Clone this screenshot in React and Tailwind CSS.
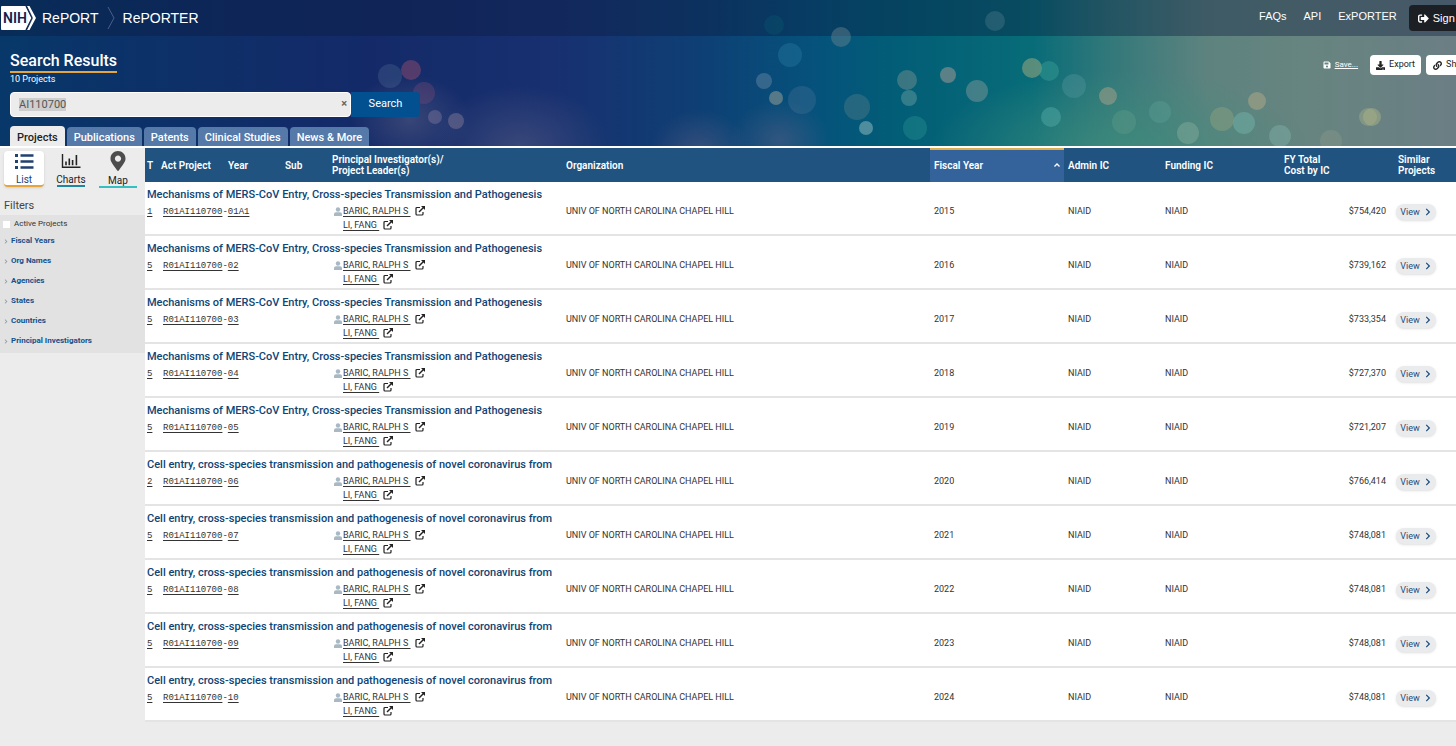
import { useEffect, useRef, useState } from "react";
import { FaChevronRight, FaDownload, FaLink, FaMapMarkerAlt, FaSave, FaSignOutAlt } from "react-icons/fa";

const MERS_TITLE = "Mechanisms of MERS-CoV Entry, Cross-species Transmission and Pathogenesis";
const CELL_TITLE = "Cell entry, cross-species transmission and pathogenesis of novel coronavirus from";

const PROJECTS = [
  { type: "1", suffix: "01A1", title: MERS_TITLE, year: 2015, cost: "$754,420" },
  { type: "5", suffix: "02",   title: MERS_TITLE, year: 2016, cost: "$739,162" },
  { type: "5", suffix: "03",   title: MERS_TITLE, year: 2017, cost: "$733,354" },
  { type: "5", suffix: "04",   title: MERS_TITLE, year: 2018, cost: "$727,370" },
  { type: "5", suffix: "05",   title: MERS_TITLE, year: 2019, cost: "$721,207" },
  { type: "2", suffix: "06",   title: CELL_TITLE, year: 2020, cost: "$766,414" },
  { type: "5", suffix: "07",   title: CELL_TITLE, year: 2021, cost: "$748,081" },
  { type: "5", suffix: "08",   title: CELL_TITLE, year: 2022, cost: "$748,081" },
  { type: "5", suffix: "09",   title: CELL_TITLE, year: 2023, cost: "$748,081" },
  { type: "5", suffix: "10",   title: CELL_TITLE, year: 2024, cost: "$748,081" },
];

const TABS = ["Projects", "Publications", "Patents", "Clinical Studies", "News & More"];
const FILTERS = ["Fiscal Years", "Org Names", "Agencies", "States", "Countries", "Principal Investigators"];

// [cx, cy, r, fill, opacity]
const BOKEH = [
  [390, 76, 12, "#5f7fa0", 0.25],   [411, 70, 10, "#a0506e", 0.45],  [424, 93, 11, "#8a5078", 0.3],
  [435, 117, 7, "#8a80a0", 0.4],    [456, 121, 8, "#8a7f9a", 0.45],  [774, 25, 10, "#0a5a70", 0.35],
  [790, 55, 12, "#2a80a8", 0.35],   [841, 37, 10, "#6a8490", 0.45],  [764, 81, 8, "#6d8ba5", 0.45],
  [776, 98, 7, "#a3a595", 0.5],     [802, 100, 14, "#4a7296", 0.35], [857, 107, 13, "#5b8088", 0.4],
  [866, 128, 7, "#7fb0b5", 0.6],    [907, 80, 10, "#6a8a8c", 0.55],  [909, 98, 8, "#5c959a", 0.55],
  [948, 75, 8, "#8a9290", 0.65],    [977, 91, 11, "#6b8f92", 0.6],   [915, 128, 12, "#2f9a94", 0.35],
  [995, 21, 10, "#4a7a8c", 0.4],    [1032, 68, 10, "#86a07c", 0.65], [1049, 71, 10, "#3aa094", 0.45],
  [1074, 86, 12, "#4e9298", 0.45],  [1051, 117, 10, "#50a8a4", 0.5], [1108, 96, 9, "#9a9c86", 0.6],
  [1124, 122, 12, "#5a9a88", 0.45], [1160, 112, 11, "#5aa096", 0.4], [1188, 133, 11, "#82aa9a", 0.5],
  [1222, 119, 12, "#8aa07e", 0.5],  [1244, 123, 11, "#72b2a8", 0.5], [1257, 101, 9, "#a0a186", 0.65],
  [1280, 136, 11, "#7aaaa0", 0.55], [1331, 141, 11, "#8a9a86", 0.4], [1368, 117, 9, "#a0b088", 0.45],
  [1372, 117, 9, "#b0b688", 0.45],
];

function Backdrop() {
  return (
    <svg aria-hidden="true" className="absolute inset-0 h-full w-full" viewBox="0 0 1456 146" preserveAspectRatio="none">
      <defs>
        <linearGradient id="sky">
          <stop offset="0" stopColor="#08386a" />
          <stop offset="0.1" stopColor="#0c3168" />
          <stop offset="0.25" stopColor="#142a68" />
          <stop offset="0.38" stopColor="#183070" />
          <stop offset="0.48" stopColor="#0e3f74" />
          <stop offset="0.56" stopColor="#05527c" />
          <stop offset="0.62" stopColor="#025e76" />
          <stop offset="0.71" stopColor="#086c78" />
          <stop offset="0.76" stopColor="#31787a" />
          <stop offset="0.83" stopColor="#5e837f" />
          <stop offset="0.9" stopColor="#678480" />
          <stop offset="1" stopColor="#6b7e84" />
        </linearGradient>
        <radialGradient id="mist">
          <stop offset="0" stopColor="#3f8c7c" stopOpacity="0.8" />
          <stop offset="1" stopColor="#3f8c7c" stopOpacity="0" />
        </radialGradient>
        <radialGradient id="haze">
          <stop offset="0" stopColor="#5a5f84" stopOpacity="0.5" />
          <stop offset="1" stopColor="#5a5f84" stopOpacity="0" />
        </radialGradient>
      </defs>
      <rect width="1456" height="146" fill="url(#sky)" />
      <ellipse cx="1120" cy="150" rx="190" ry="80" fill="url(#mist)" />
      <ellipse cx="520" cy="146" rx="90" ry="60" fill="url(#haze)" />
      <ellipse cx="410" cy="120" rx="60" ry="45" fill="url(#haze)" />
      <ellipse cx="700" cy="150" rx="50" ry="40" fill="url(#haze)" />
      <ellipse cx="780" cy="140" rx="50" ry="40" fill="url(#haze)" />
      <rect width="1456" height="36" fill="#0a1a3c" opacity="0.38" />
      {BOKEH.map(([cx, cy, r, fill, opacity]) => (
        <circle key={`${cx}-${cy}`} cx={cx} cy={cy} r={r} fill={fill} opacity={opacity} />
      ))}
    </svg>
  );
}

function NihLogo() {
  return (
    <svg role="img" aria-label="NIH" className="h-6 w-9" viewBox="0 0 36 24">
      <path d="M2 0H26L33 12L26 24H2Q1 24 1 23V1Q1 0 2 0Z" fill="#fff" />
      <path d="M27 0H29.5L36 12L29.5 24H27L33 12Z" fill="#fff" />
      <path d="M26 0L32 12L26 24" fill="none" stroke="#10234e" strokeWidth="1.3" />
      <text x="3" y="17" fontSize="14" fontWeight="600" fontFamily="Roboto" fill="#10234e">NIH</text>
    </svg>
  );
}

function ListIcon() {
  return (
    <svg aria-hidden="true" className="h-4 w-5" viewBox="0 0 20 16" fill="#20426e">
      <path d="M1 1H4V4H1ZM1 7H4V10H1ZM1 13H4V16H1Z" />
      <path d="M6.5 1.3H19.5V3.7H6.5ZM6.5 7.3H19.5V9.7H6.5ZM6.5 13.3H19.5V15.7H6.5Z" />
    </svg>
  );
}

function ChartsIcon() {
  return (
    <svg aria-hidden="true" className="h-4 w-5" viewBox="0 0 20 16" fill="none" stroke="#222" strokeWidth="1.4">
      <path d="M1.5 1V14.3H19.5" />
      <path d="M5 8.5V12.3M8.3 5.5V12.3M11.6 7V12.3M15.4 2V12.3" strokeWidth="1.6" />
    </svg>
  );
}

function ExternalIcon() {
  return (
    <svg aria-hidden="true" className="h-[10px] w-[10px] shrink-0" viewBox="0 0 10 10" fill="none" stroke="#222" strokeWidth="1.2">
      <path d="M5 1.5H2Q1 1.5 1 2.5V8Q1 9 2 9H7Q8 9 8 8V6" />
      <path d="M4 6L8.5 1.5" strokeWidth="1.5" />
      <path d="M6 0H10V4Z" fill="#222" stroke="none" />
    </svg>
  );
}

function PersonIcon() {
  return (
    <svg aria-hidden="true" className="h-[9px] w-2 shrink-0" viewBox="0 0 8 9" fill="#a9b9c4">
      <circle cx="4" cy="2.5" r="2.2" />
      <path d="M0 9V7Q0 5.3 2 5.3H6Q8 5.3 8 7V9Z" />
    </svg>
  );
}

function ViewSwitch({ label, icon, className }) {
  return (
    <button type="button" className={`flex flex-col items-center justify-between border-b-2 text-[10px] leading-[11px] ${className}`}>
      {icon}
      {label}
    </button>
  );
}

function Sidebar() {
  return (
    <aside className="w-[145px] shrink-0 bg-[#ececec]">
      <div className="flex items-start px-1 pt-[3px]">
        <ViewSwitch
          label="List"
          className="h-9 w-10 rounded-sm border-[#e5a53a] bg-white pt-[2px] text-[#20427a] shadow-sm"
          icon={<ListIcon />}
        />
        <ViewSwitch label="Charts" className="ml-[13px] h-9 w-7 border-[#1f86a0] pt-[2px] text-[#222]" icon={<ChartsIcon />} />
        <ViewSwitch
          label="Map"
          className="ml-[14px] h-[37px] w-[38px] border-[#35bfc0] text-[#222]"
          icon={<FaMapMarkerAlt className="h-5 w-5 text-[#4d4d4d]" />}
        />
      </div>
      <h2 className="mt-1 px-1 pt-[6px] pb-px text-[11px] leading-4 text-[#444]">Filters</h2>
      <div className="bg-[#e2e2e2] pt-[2px] pb-[2px]">
        <label className="flex h-[14px] items-center gap-1 px-[3px] text-[8px] text-[#333]">
          <input type="checkbox" className="h-[7px] w-[7px] appearance-none bg-white" />
          Active Projects
        </label>
        {FILTERS.map(name => (
          <button key={name} type="button" className="flex h-5 w-full items-center gap-[3px] px-1 text-[8px] font-bold text-[#15518c]">
            <FaChevronRight className="h-[5px] w-1 shrink-0 text-[#8a9aa8]" />
            {name}
          </button>
        ))}
      </div>
    </aside>
  );
}

function Investigator({ name, contact }) {
  return (
    <div className="flex h-[14px] items-center pl-[2px]">
      {contact ? <PersonIcon /> : <span className="w-2" />}
      <a href="#investigator" className="ml-px whitespace-pre underline underline-offset-2">{`${name} `}</a>
      <span className="ml-1"><ExternalIcon /></span>
    </div>
  );
}

function ProjectRows({ project }) {
  return (
    <tbody>
      <tr>
        <td colSpan={9} className="h-[22px] pt-1 pl-[2px] text-[11px] leading-4 font-medium text-[#0f4474]">
          {project.title}
        </td>
      </tr>
      <tr className="h-8 align-top text-[9px] leading-[14px] text-[#333] *:border-b-2 *:border-[#e4e4e4]">
        <td className="pt-px pl-[2px] font-['Liberation_Mono',monospace]">
          <a href="#type" className="underline underline-offset-2">{project.type}</a>
        </td>
        <td className="pt-px pl-[2px] font-['Liberation_Mono',monospace]">
          <a href="#project" className="underline underline-offset-2">R01AI110700</a>-
          <a href="#year" className="underline underline-offset-2">{project.suffix}</a>
        </td>
        <td>
          <Investigator name="BARIC, RALPH S" contact />
          <Investigator name="LI, FANG" />
        </td>
        <td>UNIV OF NORTH CAROLINA CHAPEL HILL</td>
        <td className="pl-1">{project.year}</td>
        <td className="pl-1">NIAID</td>
        <td>NIAID</td>
        <td className="pr-[10px] text-right">{project.cost}</td>
        <td>
          <button
            type="button"
            className="flex h-4 w-10 items-center justify-center gap-1 rounded-full bg-[#eaebed] text-[#1d4d7e] shadow-sm"
          >
            View <FaChevronRight className="h-2 w-2" />
          </button>
        </td>
      </tr>
    </tbody>
  );
}

function ResultsTable() {
  return (
    <table className="w-full table-fixed border-separate border-spacing-0 bg-white">
      <colgroup>
        <col className="w-4" />
        <col className="w-[171px]" />
        <col className="w-[234px]" />
        <col />
        <col className="w-[134px]" />
        <col className="w-[101px]" />
        <col className="w-[119px]" />
        <col className="w-[112px]" />
        <col className="w-[60px]" />
      </colgroup>
      <thead>
        <tr className="h-[34px] bg-[#20537f] text-left text-[10px] leading-[11px] text-white *:font-semibold">
          <th className="pl-[2px]">T</th>
          <th>
            <span className="flex">
              <span className="w-[67px]">Act Project</span>
              <span className="w-[57px]">Year</span>
              <span>Sub</span>
            </span>
          </th>
          <th>Principal Investigator(s)/<br />Project Leader(s)</th>
          <th>Organization</th>
          <th className="border-t-2 border-[#dcae4e] bg-[#33639a] px-1 pb-[2px]">
            <button type="button" className="flex w-full items-center justify-between">
              Fiscal Year
              <svg aria-hidden="true" className="h-1 w-[6px]" viewBox="0 0 6 4" fill="none" stroke="#fff" strokeWidth="1.3">
                <path d="M0.5 3.5L3 1L5.5 3.5" />
              </svg>
            </button>
          </th>
          <th className="pl-1">Admin IC</th>
          <th>Funding IC</th>
          <th>FY Total<br />Cost by IC</th>
          <th className="pl-[2px]">Similar<br />Projects</th>
        </tr>
      </thead>
      {PROJECTS.map(project => (
        <ProjectRows key={project.year} project={project} />
      ))}
    </table>
  );
}

export default function App() {
  const [query, setQuery] = useState("AI110700");
  const [activeTab, setActiveTab] = useState("Projects");
  const searchRef = useRef(null);

  useEffect(() => {
    searchRef.current.focus();
    searchRef.current.select();
  }, []);

  return (
    <div className="min-h-screen overflow-x-hidden bg-[#ececec] font-[Roboto,sans-serif]">
      <header className="relative overflow-hidden border-b-2 border-white text-white">
        <Backdrop />
        <div className="relative">
          <div className="-mr-5 flex h-9 items-center justify-between">
            <div className="flex items-center font-['Liberation_Sans',sans-serif] text-sm font-medium">
              <NihLogo />
              <a href="#report" className="ml-[6px]">RePORT</a>
              <svg aria-hidden="true" className="mx-2 h-6 w-2" viewBox="0 0 8 24" fill="none" stroke="#4a5f8a">
                <path d="M1 1L7 12L1 23" />
              </svg>
              <a href="#reporter">RePORTER</a>
            </div>
            <nav className="flex items-center font-['Liberation_Sans',sans-serif] text-[11px]">
              <div className="mr-3 flex gap-[17px] pb-1">
                <a href="#faqs">FAQs</a>
                <a href="#api">API</a>
                <a href="#exporter">ExPORTER</a>
              </div>
              <button type="button" className="flex h-[26px] items-center gap-1 rounded bg-[#1c2024] px-[9px]">
                <FaSignOutAlt /> Sign In
              </button>
            </nav>
          </div>

          <div className="flex items-start justify-between pt-[15px] pl-[10px]">
            <div>
              <h1 className="border-b-2 border-[#e5a53a] text-[16px] leading-5 font-medium">Search Results</h1>
              <p className="text-[9px] leading-3">10 Projects</p>
            </div>
            <div className="-mr-5 flex items-center gap-[5px] pt-1 text-[9px] text-[#222]">
              <button type="button" className="mr-[7px] flex items-center gap-1 text-[8px] text-white">
                <FaSave /> <span className="underline">Save...</span>
              </button>
              <button type="button" className="flex h-5 items-center gap-1 rounded-sm bg-white px-[6px]">
                <FaDownload /> Export
              </button>
              <button type="button" className="flex h-5 items-center gap-1 rounded-sm bg-white px-[7px]">
                <FaLink /> Share
              </button>
            </div>
          </div>

          <form className="mt-[7px] flex pl-[10px]" onSubmit={e => e.preventDefault()}>
            <div className="relative w-[341px]">
              <input
                ref={searchRef}
                type="text"
                aria-label="Search projects"
                value={query}
                onChange={e => setQuery(e.target.value)}
                className="block h-[25px] w-full rounded border border-white bg-[#ececec] px-2 text-[11px] text-[#555] outline-none selection:bg-[#cecece] selection:text-[#555]"
              />
              <button
                type="button"
                aria-label="Clear search"
                onClick={() => setQuery("")}
                className="absolute inset-y-0 right-1 text-[11px] font-bold text-[#666]"
              >
                ×
              </button>
            </div>
            <button type="submit" className="w-[69px] rounded-r bg-[#02508f] text-[11px]">Search</button>
          </form>

          <div className="mt-[9px] flex items-end gap-[2px] pl-[10px]">
            {TABS.map(tab => (
              <button
                key={tab}
                type="button"
                onClick={() => setActiveTab(tab)}
                className={
                  tab === activeTab
                    ? "h-5 rounded-t-sm bg-[#ececec] px-[7px] pt-[3px] text-[11px] leading-4 font-medium text-[#222]"
                    : "h-[19px] rounded-t-sm bg-[#5579a9] px-[7px] pt-[3px] text-[11px] leading-4 font-medium text-white"
                }
              >
                {tab}
              </button>
            ))}
          </div>
        </div>
      </header>

      <div className="flex">
        <Sidebar />
        <main className="min-w-0 flex-1">
          <ResultsTable />
        </main>
      </div>
    </div>
  );
}
